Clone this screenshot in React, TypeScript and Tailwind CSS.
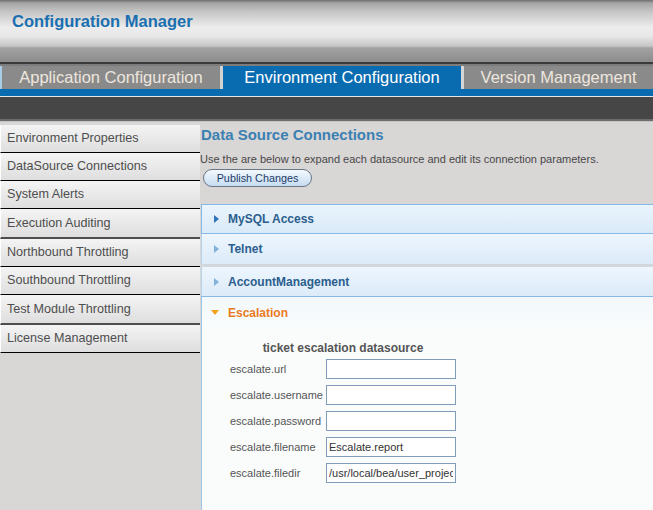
import React from 'react';

const sideItems = [
  { label: 'Environment Properties', thick: false },
  { label: 'DataSource Connections', thick: false },
  { label: 'System Alerts', thick: false },
  { label: 'Execution Auditing', thick: true },
  { label: 'Northbound Throttling', thick: false },
  { label: 'Southbound Throttling', thick: false },
  { label: 'Test Module Throttling', thick: true },
  { label: 'License Management', thick: false },
];

const fields = [
  { name: 'escalate.url', value: '' },
  { name: 'escalate.username', value: '' },
  { name: 'escalate.password', value: '' },
  { name: 'escalate.filename', value: 'Escalate.report' },
  { name: 'escalate.filedir', value: '/usr/local/bea/user_projects/domains' },
];

const RightTri = ({ dark }: { dark?: boolean }) => (
  <svg width="5" height="8" viewBox="0 0 5 8" className="shrink-0">
    <path d="M0 0 L5 4 L0 8 Z" fill={dark ? '#2f74b6' : '#80b2db'} />
  </svg>
);

const DownTri = () => (
  <svg width="8" height="5" viewBox="0 0 8 5" className="shrink-0">
    <path d="M0 0 L8 0 L4 5 Z" fill="#f4a21c" />
  </svg>
);

export default function App() {
  return (
    <div className="w-[653px] h-[510px] overflow-hidden bg-[#d9d6d6] font-['Liberation_Sans',Arial,sans-serif] flex flex-col">
      {/* Header */}
      <div className="h-[62px] shrink-0 px-[12px] pt-[11px] bg-[linear-gradient(to_bottom,#6e6e6e_0px,#a5a5a5_3px,#c6c6c6_12px,#ececec_27px,#e8e8e8_36px,#c6c6c6_46px,#a2a2a2_48px,#8c8c8c_62px)]">
        <h1 className="text-[16.5px] leading-[20px] font-bold text-[#1a6fb0]">Configuration Manager</h1>
      </div>
      <div className="h-[2px] shrink-0 bg-[#3a3a3a]" />
      <div className="h-[2px] shrink-0 bg-[#7c7c7c]" />

      {/* Tabs */}
      <div className="h-[23px] shrink-0 flex text-[16.5px] leading-[23px] bg-[#0a6cb0]">
        <div className="w-[223px] bg-[#8a8a8a] border-l-2 border-l-[#a9cde6] border-r-[3px] border-r-[#d2d2d2] text-center text-[#eee6de]">
          Application Configuration
        </div>
        <div className="w-[238px] bg-[#0a6cb0] text-center text-white">Environment Configuration</div>
        <div className="flex-1 bg-[#8a8a8a] border-l-[3px] border-l-[#d6d6d6] text-center text-[#eee6de]">
          Version Management
        </div>
      </div>
      <div className="h-[7px] shrink-0 bg-[#0a6cb0]" />
      <div className="h-[1px] shrink-0 bg-[#e6e6e6]" />
      <div className="h-[22px] shrink-0 bg-[#464646]" />
      <div className="h-[2px] shrink-0 bg-[#6c6c6c]" />
      <div className="h-[1px] shrink-0 bg-[#c4c4c4]" />

      {/* Body */}
      <div className="flex flex-1 min-h-0">
        {/* Sidebar */}
        <div className="w-[200px] shrink-0 pt-[3px]">
          {sideItems.map((item) => (
            <div
              key={item.label}
              className={`flex items-center pl-[6px] text-[12.6px] text-[#4e4e4e] bg-[linear-gradient(to_bottom,#f4f4f4,#dedede)] border-l border-l-white ${
                item.thick ? 'h-[30px] border-b-2 border-b-[#4e4e4e]' : 'h-[28px] border-b border-b-black'
              }`}
            >
              {item.label}
            </div>
          ))}
        </div>

        {/* Content */}
        <div className="flex-1 min-w-0 overflow-hidden flex flex-col">
          <h2 className="pl-[1px] pt-[3px] text-[15px] leading-[20px] font-bold text-[#3b80b2]">Data Source Connections</h2>
          <p className="mt-[8px] text-[11px] leading-[13px] text-[#484848] whitespace-nowrap">
            Use the are below to expand each datasource and edit its connection parameters.
          </p>
          <div className="pl-[3px] mt-[3px] flex">
            <button className="w-[109px] h-[18px] rounded-full border border-[#6a7686] bg-[linear-gradient(to_bottom,#f4f9fe,#dcebf8_50%,#c6dcf1)] text-[10.8px] leading-[16px] text-[#1d3b68]">
              Publish Changes
            </button>
          </div>

          {/* Accordion */}
          <div className="mt-[17px] ml-[1px] mr-[-4px] flex flex-col flex-1">
            <div className="h-[30px] shrink-0 flex items-center gap-[9px] pl-[12px] border border-[#86b9e5] bg-[linear-gradient(to_bottom,#e9f4fd,#e2effa_50%,#d9eaf8)]">
              <RightTri dark />
              <span className="text-[12px] font-bold text-[#2b5e8e]">MySQL Access</span>
            </div>
            <div className="h-[30px] shrink-0 flex items-center gap-[9px] pl-[12px] border-l border-l-[#b3d3ee] bg-[linear-gradient(to_bottom,#eef6fe,#e4f0fb_50%,#dcebf8)]">
              <RightTri />
              <span className="text-[12px] font-bold text-[#2b5e8e]">Telnet</span>
            </div>
            <div className="h-[3px] shrink-0 bg-[#d1d7dd]" />
            <div className="h-[29px] shrink-0 flex items-center gap-[9px] pl-[12px] border-l border-l-[#b3d3ee] bg-[linear-gradient(to_bottom,#eef6fe,#e4f0fb_50%,#dcebf8)]">
              <RightTri />
              <span className="text-[12px] font-bold text-[#2b5e8e]">AccountManagement</span>
            </div>
            <div className="h-[1px] shrink-0 bg-[#86b9e5]" />
            <div className="flex-1 border-l border-l-[#9cc5e6] bg-[#fafcfc]">
              <div className="h-[31px] flex items-center gap-[9px] pl-[9px] bg-[linear-gradient(to_bottom,#f2f8fc,#fafcfc)]">
                <DownTri />
                <span className="text-[12px] font-bold text-[#ea7a1f]">Escalation</span>
              </div>
              <div className="pl-[28px] pt-[13px]">
                <div className="w-[226px] text-center text-[12px] leading-[14px] font-bold text-[#555]">
                  ticket escalation datasource
                </div>
                <div className="mt-[4px] flex flex-col gap-[6px]">
                  {fields.map((f) => (
                    <div key={f.name} className="flex items-center">
                      <span className="w-[96px] text-[11px] text-[#555]">{f.name}</span>
                      <input
                        readOnly
                        value={f.value}
                        className="w-[130px] h-[20px] border border-[#7f9db9] bg-white px-[2px] text-[11px] text-[#333] outline-none"
                      />
                    </div>
                  ))}
                </div>
              </div>
            </div>
          </div>
        </div>
      </div>
    </div>
  );
}
